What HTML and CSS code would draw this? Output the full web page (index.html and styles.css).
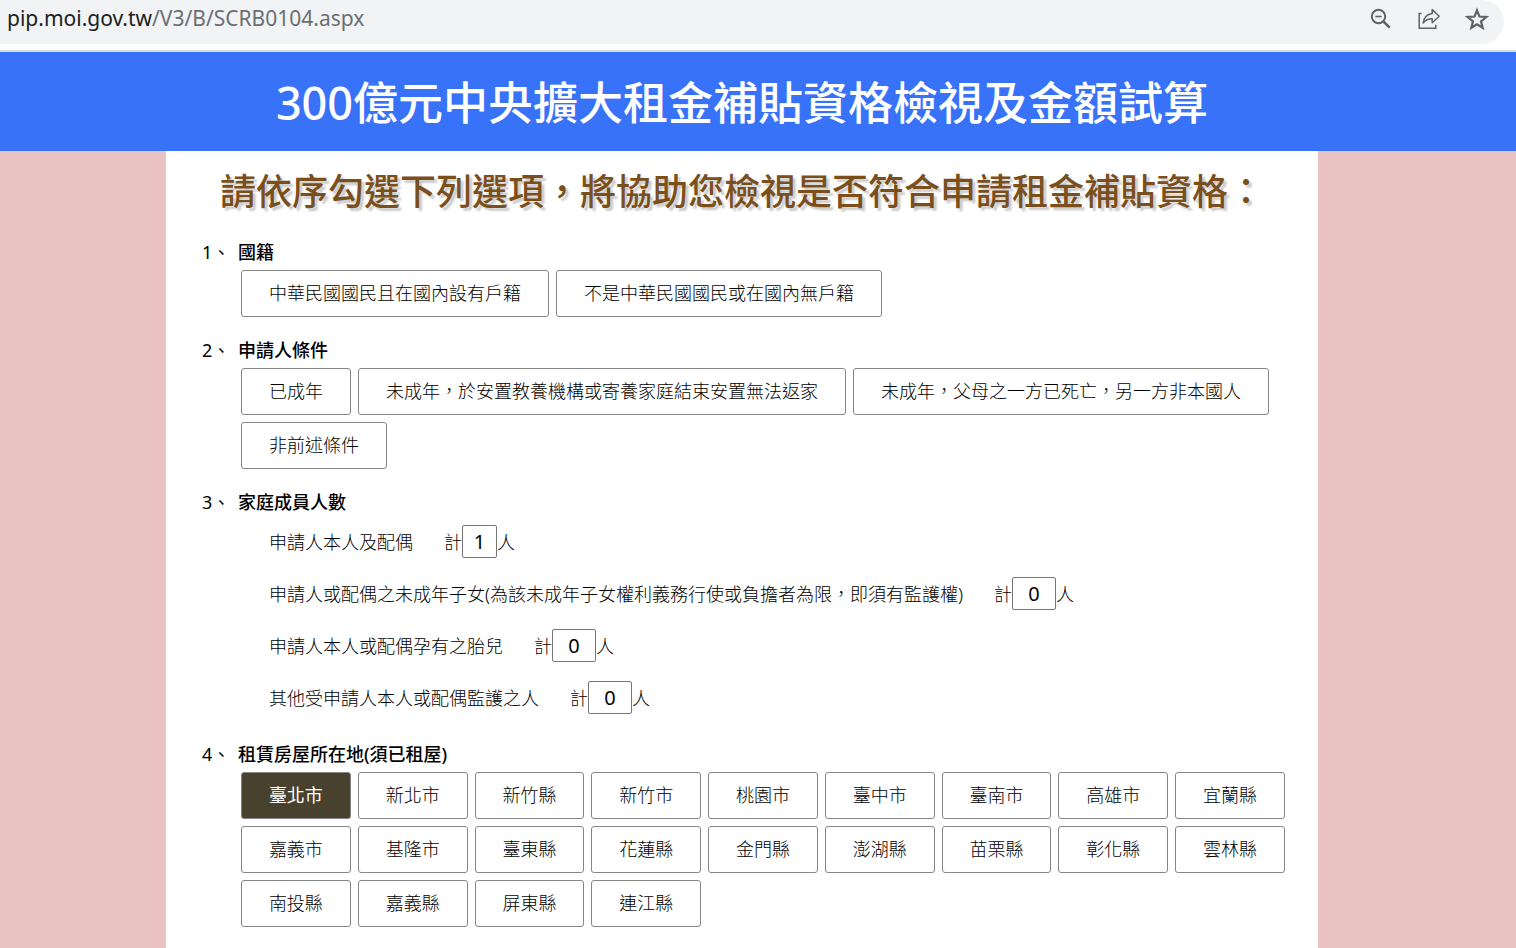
FILE: index.html
```html
<!DOCTYPE html>
<html lang="zh-Hant-TW">
<head>
  <meta charset="UTF-8">
  <meta name="viewport" content="width=device-width, initial-scale=1.0">
  <title>300億元中央擴大租金補貼資格檢視及金額試算</title>
  <link rel="stylesheet" href="styles.css">
</head>
<body>

  <!-- Address bar -->
  <div class="browser-bar">
    <div class="address">
      <div class="url">pip.moi.gov.tw<span class="url-path">/V3/B/SCRB0104.aspx</span></div>
      <div class="address-tools">
        <button type="button" class="tool" aria-label="縮放">
          <svg width="24" height="24" viewBox="0 0 24 24" fill="none" stroke="#5f6368" stroke-width="2">
            <circle cx="9.5" cy="9.5" r="6.7"/>
            <path d="M6.3 9.5h6.4" stroke-width="1.6"/>
            <path d="M14.3 14.3l6.4 6.4" stroke-width="2.6"/>
          </svg>
        </button>
        <button type="button" class="tool" aria-label="分享">
          <svg width="24" height="24" viewBox="0 0 24 24" fill="none" stroke="#5f6368" stroke-width="1.5">
            <path d="M4.5 6.5H2.2v14.700h16.600v-3.400"/>
            <path d="M15.200 2.600l7 6.700-7 6.400v-3.900c-4 0-6.500 1.100-9 4.200.6-5 3.600-8.700 9-9.500z" stroke-linejoin="round"/>
          </svg>
        </button>
        <button type="button" class="tool" aria-label="加入書籤">
          <svg width="24" height="24" viewBox="0 0 24 24" fill="none" stroke="#5f6368" stroke-width="2.2">
            <path d="M12 3.300l2.400 6.200 6.900.5-5.300 4.300 1.700 6.500L12 17.200l-5.700 3.600L8 14.300 2.700 10l6.900-.5z"/>
          </svg>
        </button>
      </div>
    </div>
  </div>

  <header class="header">
    <h1>300億元中央擴大租金補貼資格檢視及金額試算</h1>
  </header>

  <main class="page">
    <div class="container">
      <h2>請依序勾選下列選項，將協助您檢視是否符合申請租金補貼資格：</h2>

      <section class="question">
        <h3><span class="number">1、</span>國籍</h3>
        <div class="options">
          <button type="button" class="option">中華民國國民且在國內設有戶籍</button>
          <button type="button" class="option">不是中華民國國民或在國內無戶籍</button>
        </div>
      </section>

      <section class="question">
        <h3><span class="number">2、</span>申請人條件</h3>
        <div class="options">
          <button type="button" class="option">已成年</button>
          <button type="button" class="option">未成年，於安置教養機構或寄養家庭結束安置無法返家</button>
          <button type="button" class="option">未成年，父母之一方已死亡，另一方非本國人</button>
          <button type="button" class="option">非前述條件</button>
        </div>
      </section>

      <section class="question">
        <h3><span class="number">3、</span>家庭成員人數</h3>
        <div class="members">
          <div class="member">
            <label for="self">申請人本人及配偶</label>
            <span>計</span><input type="text" class="count count-small" id="self" value="1"><span>人</span>
          </div>
          <div class="member">
            <label for="children">申請人或配偶之未成年子女(為該未成年子女權利義務行使或負擔者為限，即須有監護權)</label>
            <span>計</span><input type="text" class="count" id="children" value="0"><span>人</span>
          </div>
          <div class="member">
            <label for="unborn">申請人本人或配偶孕有之胎兒</label>
            <span>計</span><input type="text" class="count" id="unborn" value="0"><span>人</span>
          </div>
          <div class="member">
            <label for="others">其他受申請人本人或配偶監護之人</label>
            <span>計</span><input type="text" class="count" id="others" value="0"><span>人</span>
          </div>
        </div>
      </section>

      <section class="question">
        <h3><span class="number">4、</span>租賃房屋所在地(須已租屋)</h3>
        <div class="options cities">
          <button type="button" class="option selected" aria-pressed="true">臺北市</button>
          <button type="button" class="option">新北市</button>
          <button type="button" class="option">新竹縣</button>
          <button type="button" class="option">新竹市</button>
          <button type="button" class="option">桃園市</button>
          <button type="button" class="option">臺中市</button>
          <button type="button" class="option">臺南市</button>
          <button type="button" class="option">高雄市</button>
          <button type="button" class="option">宜蘭縣</button>
          <button type="button" class="option">嘉義市</button>
          <button type="button" class="option">基隆市</button>
          <button type="button" class="option">臺東縣</button>
          <button type="button" class="option">花蓮縣</button>
          <button type="button" class="option">金門縣</button>
          <button type="button" class="option">澎湖縣</button>
          <button type="button" class="option">苗栗縣</button>
          <button type="button" class="option">彰化縣</button>
          <button type="button" class="option">雲林縣</button>
          <button type="button" class="option">南投縣</button>
          <button type="button" class="option">嘉義縣</button>
          <button type="button" class="option">屏東縣</button>
          <button type="button" class="option">連江縣</button>
        </div>
      </section>
    </div>
  </main>

</body>
</html>
```

FILE: styles.css
```css
* {
  box-sizing: border-box;
}

body {
  font-family: "Noto Sans", "Noto Sans CJK TC", sans-serif;
  font-size: 18px;
  font-weight: 300;
  line-height: 24px;
  color: #000;
  background-color: #eac2c2;
  margin: 0;
  min-height: 100vh;
  display: flex;
  flex-direction: column;
}

h1, h2, h3 {
  margin: 0;
}

/* Address bar */
.browser-bar {
  background-color: #fff;
  padding: 0 12px 6px 0;
  border-bottom: 2px solid #d5dbe0;
}

.address {
  display: flex;
  justify-content: space-between;
  align-items: flex-start;
  height: 44px;
  padding: 7px 15px 0 7px;
  background-color: #f1f3f4;
  border-radius: 0 22px 22px 0;
}

.url {
  font-size: 21px;
  font-weight: 400;
  line-height: 22px;
  color: #202124;
}

.url-path {
  color: #6b6f73;
}

.address-tools {
  display: flex;
  gap: 24px;
}

.tool {
  display: flex;
  padding: 0;
  border: none;
  background: none;
  cursor: pointer;
}

/* Title */
.header {
  background-color: #3872f9;
  color: #fff;
  text-align: center;
  padding: 21px 32px 18px 0;
}

.header h1 {
  font-size: 45px;
  font-weight: 500;
  line-height: 60px;
}

.page {
  flex: 1;
  display: flex;
  justify-content: center;
  padding-right: 32px;
}

.container {
  width: 78%;
  max-width: 1152px;
  background-color: #fff;
  padding: 17px 33px 20px 36px;
}

.container h2 {
  font-size: 36px;
  font-weight: 500;
  line-height: 48px;
  color: #7a4f1c;
  text-shadow: 3px 3px 2px #ccc;
  padding-left: 18px;
  margin-bottom: 24px;
}

/* Questions */
.question {
  margin-bottom: 21px;
}

.question h3 {
  display: flex;
  font-size: 18px;
  font-weight: 500;
  line-height: 24px;
  margin-bottom: 6px;
}

.number {
  width: 36px;
  font-weight: 400;
}

.options {
  display: flex;
  flex-wrap: wrap;
  gap: 7px;
  padding-left: 39px;
}

.cities {
  display: grid;
  grid-template-columns: repeat(auto-fill, minmax(109px, 1fr));
}

.option {
  height: 47px;
  padding: 0 27px 2px;
  border: 1px solid #868686;
  border-radius: 3px;
  background-color: #fff;
  color: #000;
  font: inherit;
  white-space: nowrap;
  cursor: pointer;
}

.cities .option {
  padding: 0 0 2px;
}

.option.selected {
  background-color: #47412d;
  color: #fff;
  font-weight: 400;
}

/* Family members */
.members {
  display: flex;
  flex-direction: column;
  gap: 19px;
  padding: 5px 0 7px 67px;
}

.member {
  display: flex;
  align-items: center;
}

.member label {
  margin-right: 31px;
}

.count {
  width: 44px;
  height: 33px;
  padding: 0;
  border: 1px solid #767676;
  border-radius: 2px;
  background-color: #fff;
  color: #000;
  font: inherit;
  font-size: 20px;
  font-weight: 400;
  text-align: center;
}

.count-small {
  width: 35px;
}
```
